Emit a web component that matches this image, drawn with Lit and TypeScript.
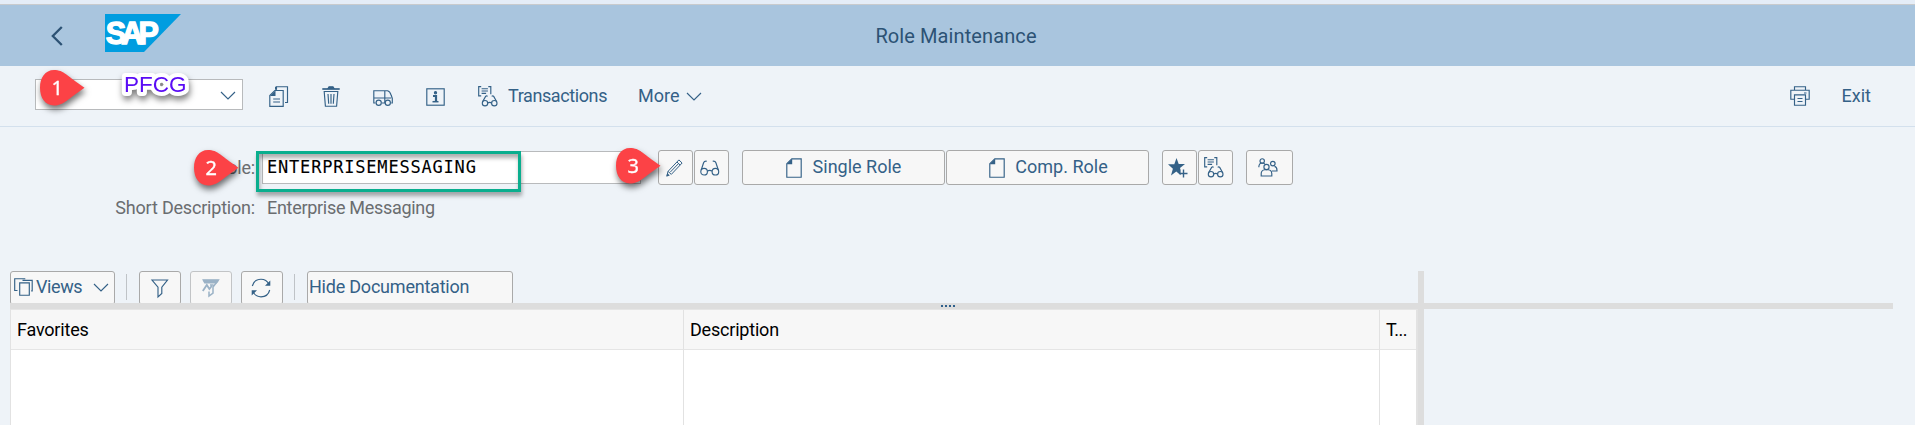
import { LitElement, html, css, svg } from "lit";
import { customElement, property } from "lit/decorators.js";

const icons: Record<string, [number, number, unknown]> = {
  back: [12, 20, svg`<path stroke-width="2.3" d="M10.800 1L1.800 10l9 9"/>`],
  chevron: [16, 9, svg`<path d="M1 1l7 7 7-7"/>`],
  copy: [20, 21, svg`<path d="M7.500 3.500V.7h11V16.500h-2.500"/><path fill="currentColor" d="M6 .7h2v3H6zM1 10l5.500-5.500V10z" stroke="none"/><path d="M.8 20.300V9.500l5-5h8.400v15.800zM4.200 13h6.800M4.200 16h6.800"/>`],
  trash: [18, 21, svg`<path stroke-width="1.700" d="M.3 3h17.400"/><path fill="currentColor" d="M6 2.500l1-1.700h4l1 1.700z"/><path d="M2.200 5.500l1.200 14.700h11.200l1.200-14.700zM6 8l.7 9.700M9 8v9.700M12 8l-.7 9.700"/>`],
  truck: [20, 16, svg`<path d="M2.500 13H.8V.7h11V13H9M.8 8h17.400M11.800.7h2.700q2.500.6 3.700 4.600l1.100 3V13h-1.100M9 13h2"/><circle cx="5.700" cy="12.700" r="2.600"/><circle cx="14.800" cy="12.700" r="2.600"/>`],
  info: [19, 18, svg`<rect x=".8" y=".8" width="17.400" height="16.400"/><circle cx="9.500" cy="4.700" r="1.100" fill="currentColor"/><path stroke-width="2.200" d="M7 8h3v5.500"/><path stroke-width="1.500" d="M6.500 13.700h6"/>`],
  listGlasses: [20, 21, svg`
    <path d="M3.200.6H.7v9.200h2.500M10.300.6h2.500v7.600M3.600 2.700h6.300M3.600 5h6.300M3.600 7.300h4.500"/>
    <circle cx="7" cy="17.200" r="2.700"/><circle cx="16.300" cy="17.200" r="2.700"/>
    <path d="M9.700 17q2-1.200 3.900 0M4.600 15.800l3-5.400q.9-1 2 0M18.700 15.800l-3-5.400q-.9-1-2 0"/>`],
  print: [20, 20, svg`<path d="M4.500 4V.7h11V4M4.500 13.200H.8V4.200h18.400v9h-3.700M14 7h2.500"/><path d="M4.500 8.800h11v10.400h-11zM7.500 12.500h5M7.500 15.500h5"/>`],
  pencil: [17, 18, svg`<path stroke-width="1" d="M.9 17l1.100-4.600L12.900.9l3.200 3.100L5.300 15.400l-3.200-3M11 3l3.100 3.100M4.200 13.200L12.600 4.500"/><path fill="currentColor" stroke="none" d="M.3 17.700l1-3.600 2.500 2.300z"/>`],
  glasses: [20, 16, svg`<circle cx="4.100" cy="11.700" r="3.300"/><circle cx="15.400" cy="11.700" r="3.300"/><path d="M7.400 11q2.300-1.400 4.700 0M1.200 10L3.600 2.800Q4.300.8 6.800 1.200M18.300 10L15.900 2.800q-.7-2-3.200-1.600"/>`],
  doc: [16, 20, svg`<path d="M.8 19.200V5.800l5-5h9.400v18.400z"/><path fill="currentColor" stroke="none" d="M.8 6.200L6.200.8v5.400z"/>`],
  star: [20, 20, svg`<path fill="currentColor" stroke="none" d="M8.500 0l2.200 6h6.300l-5 4.100.6 1.900V17.300L8.300 13.500 3 17.500l1.900-6.700L0 6.300h6.300z"/><path stroke-width="1.400" d="M15.500 11.500v8M11.500 15.500h8"/>`],
  people: [20, 19, svg`<circle cx="4.200" cy="2.900" r="2.200"/><circle cx="14.800" cy="5.600" r="2.300"/><circle cx="8.500" cy="9" r="2.600"/><path d="M3.200 18v-2.200q0-3.700 3.600-4.100h3.400q3.600.4 3.600 4.100V18zM.9 9.200V8q.3-2.400 2-2.800h2.600q1 .3 1.400 1M16.500 8.400q2.500.6 2.500 4V13h-5"/>`],
  views: [19, 18, svg`<path d="M3.500 12.500H.7V.7h10.600M5.700 4.800h9.600v12.400H5.700zM8.500 2.300h9.700v10.500h-1"/>`],
  filter: [18, 19, svg`<path d="M1 1h15.500l-5.700 7.200v6.300L7 18V8.200z"/>`],
  filterOff: [18, 18, svg`<path fill="currentColor" d="M1 .8h15.700L14.500 4H2.700z"/><path stroke-width="1.500" d="M16 1.500L11 8v6.200L7 17v-4.500M8 6h3.500"/><path stroke-width="1.800" d="M.8 12l4-6 2.600 4 2.700-3.500"/>`],
  refresh: [20, 20, svg`<path d="M1.300 8Q3 1.200 10 1.200q5.500 0 8 5M18.700 12Q17 18.800 10 18.800q-5.500 0-8-5"/><path fill="currentColor" stroke="none" d="M19.300 2.500v5.300H14zM.7 17.500v-5.300H6z"/>`],
};

@customElement("ui-icon")
class UiIcon extends LitElement {
  @property() name = "";
  static styles = css`
    :host { display: inline-flex; flex: none; }
    svg { display: block; overflow: visible; fill: none; stroke: currentColor; stroke-width: 1.15; }
  `;
  render() {
    const [w, h, art] = icons[this.name];
    return html`<svg width=${w} height=${h} viewBox="0 0 ${w} ${h}">${art}</svg>`;
  }
}

@customElement("step-marker")
class StepMarker extends LitElement {
  @property() step = "";
  static styles = css`
    :host { position: absolute; width: 46px; height: 36px; z-index: 3; }
    svg { display: block; overflow: visible; filter: drop-shadow(1px 4px 3px rgba(0, 0, 0, 0.55)); }
    text { font: 20px "Noto Sans", sans-serif; fill: #fff; text-anchor: middle; stroke: #fff; stroke-width: 0.3; }
  `;
  render() {
    return html`<svg width="46" height="36" viewBox="0 0 46 36">
      <path fill="#fc4246" d="M14 0C24 0 27 6 44.500 17.700 27 29.500 24 35.400 14 35.400 5 35.400 0 27.500 0 17.700S5 0 14 0z"/>
      <text x="17.300" y="25">${this.step}</text>
    </svg>`;
  }
}

@customElement("app-root")
class AppRoot extends LitElement {
  static styles = css`
    :host {
      display: block; position: relative; height: 425px; overflow: hidden; box-sizing: border-box;
      background: #eef3f8; color: #346187; font: 18px/22px Roboto, sans-serif;
    }
    * { box-sizing: border-box; }
    .strip { height: 5px; background: #e5edf7; border-bottom: 1px solid #c9cbcd; }
    .shell { height: 61px; background: #a9c5de; display: grid; grid-template-columns: 1fr auto 1fr; align-items: center; color: #2c5274; }
    .brand { display: flex; align-items: center; gap: 42px; padding-left: 51px; }
    .brand svg { display: block; margin-top: -5px; }
    .title { font-size: 20px; letter-spacing: 0.1px; margin-right: 3px; padding-top: 1px; }
    .toolbar { height: 61px; border-bottom: 1px solid #d3e0ed; display: flex; align-items: center; padding: 0 44px 0 35px; }
    .combo { width: 208px; height: 31px; background: #fff; border: 1px solid #b8babc; display: flex; align-items: center; justify-content: flex-end; padding: 2px 6px 0 0; margin-top: -3px; }
    .tools { display: flex; align-items: center; flex: 1; padding-left: 26px; }
    .i-copy { margin-right: 33px; }
    .i-trash { margin-right: 33px; }
    .i-truck { margin-right: 33px; padding-top: 3px; }
    .i-info { margin-right: 33px; padding-top: 2px; }
    .label { margin-left: 10px; letter-spacing: -0.4px; }
    .more { margin: 0 6px 0 31px; }
    .exit { margin-left: 32px; }
    .form { height: 144px; padding-top: 23px; }
    .row { display: flex; height: 35px; align-items: center; }
    .key { width: 255px; text-align: right; color: #6a6d70; letter-spacing: -0.2px; }
    .field { height: 33px; width: 379px; margin-left: 7px; background: #fff; border: 1px solid #b8babc; color: #000; padding-left: 4px; font: 17px/31px "DejaVu Sans Mono", monospace; letter-spacing: 0.8px; -webkit-text-stroke: 0.1px #000; }
    .buttons { display: flex; padding-left: 17px; }
    .btn { height: 35px; border: 1px solid #a9a9a9; border-radius: 3px; background: #f7f7f7; display: flex; align-items: center; justify-content: center; width: 35px; margin-right: 1px; }
    .nudge { padding-right: 3px; }
    .wide { width: 203px; gap: 11px; }
    .wide span { margin-top: -2px; }
    .comp { padding-left: 2px; gap: 10px; }
    .push { margin-left: 12px; }
    .people { width: 47px; }
    .second { margin-top: 5px; }
    .value { margin-left: 12px; color: #6a6d70; letter-spacing: -0.3px; }
    .lower { display: grid; grid-template-columns: 1408px 6px 469px; margin-left: 10px; height: 154px; grid-template-rows: 32px 6px 1fr; }
    .bar { display: flex; }
    .bar .btn { height: 34px; width: 42px; margin-right: 9px; }
    .bar .views { width: 105px; justify-content: flex-start; padding-left: 3px; margin-right: 11px; padding-bottom: 2px; }
    .views-text { margin: 0 11px 0 3px; letter-spacing: -0.4px; }
    .sep { width: 1px; height: 26px; margin-top: 3px; background: #bfc3c7; }
    .bar .first { margin-left: 12px; }
    .bar .last { margin-right: 11px; padding-right: 2px; }
    .bar .off { color: #9bb2c6; border-color: #c2c4c6; }
    .bar .hide { width: 206px; margin-left: 12px; justify-content: flex-start; padding-left: 1px; padding-bottom: 2px; letter-spacing: -0.22px; }
    .rule { grid-column: 1 / 4; grid-row: 2; background: #ddd; display: flex; z-index: 1; align-items: center; padding-left: 931px; gap: 2px; width: 1883px; }
    .dot { width: 2px; height: 2px; background: #2f608c; }
    .vrule { grid-column: 2; grid-row: 1 / 4; background: #ddd; }
    .table { grid-column: 1; grid-row: 3; display: grid; grid-template-columns: 673px 696px 36px; grid-template-rows: 40px 1fr; border-left: 1px solid #e2e2e2; border-right: 2px solid #e2e2e2; background: #fff; color: #000; border-top: 1px solid #e5e5e5; letter-spacing: -0.2px; }
    .cell { border-right: 1px solid #e2e2e2; }
    .cell:nth-child(3n) { border-right: 0; }
    .head { background: #f7f7f7; border-bottom: 1px solid #e5e5e5; line-height: 40px; padding-left: 6px; }
    .head.tight { letter-spacing: -0.5px; }
    .frame { position: absolute; left: 256px; top: 151px; width: 265px; height: 41px; border: 3px solid #0aae8e; box-shadow: 1px 4px 4px rgba(0, 0, 0, 0.32), inset 1px 4px 4px rgba(0, 0, 0, 0.32); z-index: 2; }
    .note { position: absolute; left: 124px; top: 72px; z-index: 2; overflow: visible; filter: drop-shadow(1px 4px 3px rgba(0, 0, 0, 0.5)); }
    .note text { font: 22.5px "Liberation Sans", sans-serif; fill: #5a0cf5; stroke: #fff; stroke-width: 8px; stroke-linejoin: round; paint-order: stroke; }
    .m1 { left: 40px; top: 70px; }
    .m2 { left: 194px; top: 150px; }
    .m3 { left: 616px; top: 148px; }
  `;
  render() {
    return html`
      <div class="strip"></div>
      <header class="shell">
        <div class="brand">
          <ui-icon name="back"></ui-icon>
          <svg width="76" height="38" viewBox="0 0 76 38">
            <path fill="#009de0" d="M0 0h76L39 38H0z"/>
            <text x="0.800" y="29.600" textLength="53" lengthAdjust="spacing" font-family="Liberation Sans, sans-serif" font-weight="700" font-size="30.500" fill="#fff" stroke="#fff" stroke-width="1.300">SAP</text>
          </svg>
        </div>
        <div class="title">Role Maintenance</div>
      </header>
      <nav class="toolbar">
        <div class="combo"><ui-icon name="chevron"></ui-icon></div>
        <div class="tools">
          <ui-icon class="i-copy" name="copy"></ui-icon>
          <ui-icon class="i-trash" name="trash"></ui-icon>
          <ui-icon class="i-truck" name="truck"></ui-icon>
          <ui-icon class="i-info" name="info"></ui-icon>
          <ui-icon name="listGlasses"></ui-icon>
          <span class="label">Transactions</span>
          <span class="more">More</span>
          <ui-icon name="chevron"></ui-icon>
        </div>
        <ui-icon name="print"></ui-icon>
        <span class="exit">Exit</span>
      </nav>
      <section class="form">
        <div class="row">
          <div class="key">Role:</div>
          <div class="field">ENTERPRISEMESSAGING</div>
          <div class="buttons">
            <div class="btn nudge"><ui-icon name="pencil"></ui-icon></div>
            <div class="btn nudge"><ui-icon name="glasses"></ui-icon></div>
            <div class="btn wide push"><ui-icon name="doc"></ui-icon><span>Single Role</span></div>
            <div class="btn wide comp"><ui-icon name="doc"></ui-icon><span>Comp. Role</span></div>
            <div class="btn push nudge"><ui-icon name="star"></ui-icon></div>
            <div class="btn nudge"><ui-icon name="listGlasses"></ui-icon></div>
            <div class="btn push people nudge"><ui-icon name="people"></ui-icon></div>
          </div>
        </div>
        <div class="row second">
          <div class="key">Short Description:</div>
          <div class="value">Enterprise Messaging</div>
        </div>
      </section>
      <main class="lower">
        <div class="bar">
          <div class="btn views"><ui-icon name="views"></ui-icon><span class="views-text">Views</span><ui-icon name="chevron"></ui-icon></div>
          <div class="sep"></div>
          <div class="btn first"><ui-icon name="filter"></ui-icon></div>
          <div class="btn off"><ui-icon name="filterOff"></ui-icon></div>
          <div class="btn last"><ui-icon name="refresh"></ui-icon></div>
          <div class="sep"></div>
          <div class="btn hide">Hide Documentation</div>
        </div>
        <div class="vrule"></div>
        <div class="rule"><i class="dot"></i><i class="dot"></i><i class="dot"></i><i class="dot"></i></div>
        <div class="table">
          <div class="cell head">Favorites</div>
          <div class="cell head">Description</div>
          <div class="cell head tight">T...</div>
          <div class="cell"></div><div class="cell"></div><div class="cell"></div>
        </div>
      </main>
      <div class="frame"></div>
      <svg class="note" width="64" height="24"><text x="0" y="20">PFCG</text></svg>
      <step-marker class="m1" step="1"></step-marker>
      <step-marker class="m2" step="2"></step-marker>
      <step-marker class="m3" step="3"></step-marker>
    `;
  }
}
